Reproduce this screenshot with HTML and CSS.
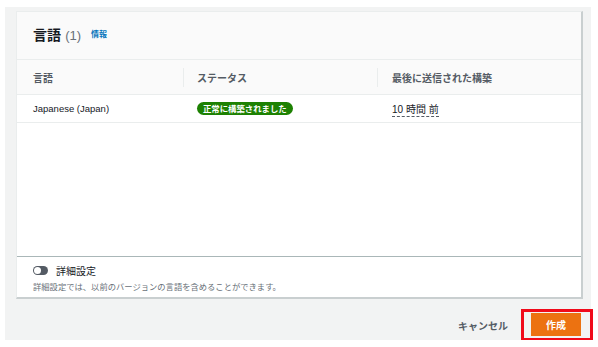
FILE: index.html
```html
<!DOCTYPE html>
<html lang="ja">
<head>
<meta charset="utf-8">
<link rel="stylesheet" href="styles.css">
</head>
<body>
<div class="page">
  <div class="card">
    <div class="card-header">
      <h2 class="title">言語 <span class="count">(1)</span></h2>
      <a class="info">情報</a>
    </div>
    <div class="table">
      <div class="row head">
        <div class="cell c1">言語</div>
        <div class="cell c2"><span class="divider"></span>ステータス</div>
        <div class="cell c3"><span class="divider"></span>最後に送信された構築</div>
      </div>
      <div class="row body">
        <div class="cell c1">Japanese (Japan)</div>
        <div class="cell c2"><span class="badge">正常に構築されました</span></div>
        <div class="cell c3"><span class="time">10 時間 前</span></div>
      </div>
      <div class="empty"></div>
    </div>
    <div class="card-footer">
      <div class="toggle-line">
        <span class="toggle"><span class="knob"></span></span>
        <span class="toggle-label">詳細設定</span>
      </div>
      <div class="desc">詳細設定では、以前のバージョンの言語を含めることができます。</div>
    </div>
  </div>
  <div class="actions">
    <span class="cancel">キャンセル</span>
    <span class="highlight"><span class="primary">作成</span></span>
  </div>
</div>
</body>
</html>
```
FILE: styles.css
```css
* { box-sizing: border-box; }
html, body { margin: 0; padding: 0; background: #fff; }
body {
  font-family: "Liberation Sans", "Noto Sans CJK JP", sans-serif;
  color: #16191f;
}
.page {
  margin: 7px 7px 0 5px;
  height: 333px;
  background: #f2f3f3;
  padding: 4px 9px 0 11px;
  display: flex;
  flex-direction: column;
}
.card {
  width: 567px;
  background: #fff;
  border-top: 1px solid #eaeded;
  border-left: 1px solid #eaeded;
  border-right: 2px solid #c9cfd0;
  border-bottom: 2px solid #c9cfd0;
  display: flex;
  flex-direction: column;
}
.card-header {
  background: #fafafa;
  height: 48px;
  display: flex;
  align-items: center;
  padding: 0 0 4px 16px;
  border-bottom: 1px solid #eaeded;
}
.title {
  margin: 0;
  font-family: "Noto Sans CJK JP", sans-serif;
  font-size: 14px;
  font-weight: 700;
  color: #16191f;
}
.count {
  font-family: "Liberation Sans", sans-serif;
  font-weight: 400;
  color: #687078;
  font-size: 13px;
  margin-left: 1px;
}
.info {
  margin-left: 10px;
  font-family: "Noto Sans CJK JP", sans-serif;
  font-size: 8px;
  font-weight: 700;
  color: #0073bb;
}
.row {
  display: flex;
  border-bottom: 1px solid #eaeded;
}
.row.head {
  background: #fafafa;
  height: 35px;
  font-family: "Noto Sans CJK JP", sans-serif;
  font-size: 10px;
  font-weight: 700;
  color: #545b64;
}
.row.body {
  height: 28px;
  font-size: 9.5px;
}
.cell {
  position: relative;
  display: flex;
  align-items: center;
}
.c1 { width: 166px; padding-left: 16px; }
.c2 { width: 194px; padding-left: 14px; }
.c3 { flex: 1; padding-left: 15px; font-size: 10px; }
.divider {
  position: absolute;
  left: 0;
  top: 8px;
  bottom: 7px;
  width: 1px;
  background: #eaeded;
}
.badge {
  display: inline-block;
  background: #1d8102;
  color: #fff;
  font-family: "Noto Sans CJK JP", sans-serif;
  font-size: 8.4px;
  font-weight: 700;
  line-height: 13px;
  padding: 0 6px;
  border-radius: 7px;
}
.time {
  font-family: "Liberation Sans", "Noto Sans CJK JP", sans-serif;
  border-bottom: 1px dashed #545b64;
  line-height: 13px;
  margin-top: 3px;
}
.empty {
  height: 133px;
}
.card-footer {
  border-top: 1px solid #aab7b8;
  padding: 6px 16px 6px 16px;
  height: 41px;
}
.toggle-line {
  display: flex;
  align-items: center;
  height: 14px;
}
.toggle {
  width: 15px;
  height: 9px;
  border-radius: 5px;
  background: #545b64;
  position: relative;
  display: inline-block;
}
.knob {
  position: absolute;
  left: 1px;
  top: 1px;
  width: 7px;
  height: 7px;
  border-radius: 50%;
  background: #fff;
}
.toggle-label {
  margin-left: 8px;
  font-family: "Noto Sans CJK JP", sans-serif;
  font-size: 10px;
  color: #16191f;
}
.desc {
  margin-top: 3px;
  font-family: "Noto Sans CJK JP", sans-serif;
  font-size: 8.3px;
  color: #687078;
}
.actions {
  display: flex;
  justify-content: flex-end;
  align-items: center;
  margin-top: 10px;
  margin-right: -11px;
}
.cancel {
  font-family: "Noto Sans CJK JP", sans-serif;
  font-size: 10px;
  font-weight: 700;
  color: #545b64;
  margin-right: 13px;
}
.highlight {
  display: inline-block;
  border: 3px solid #f00a1a;
  padding: 1px 9px 2px 7px;
}
.primary {
  display: flex;
  align-items: center;
  justify-content: center;
  width: 50px;
  height: 23px;
  background: #ec7211;
  color: #fff;
  font-family: "Noto Sans CJK JP", sans-serif;
  font-size: 10px;
  font-weight: 700;
}
```
